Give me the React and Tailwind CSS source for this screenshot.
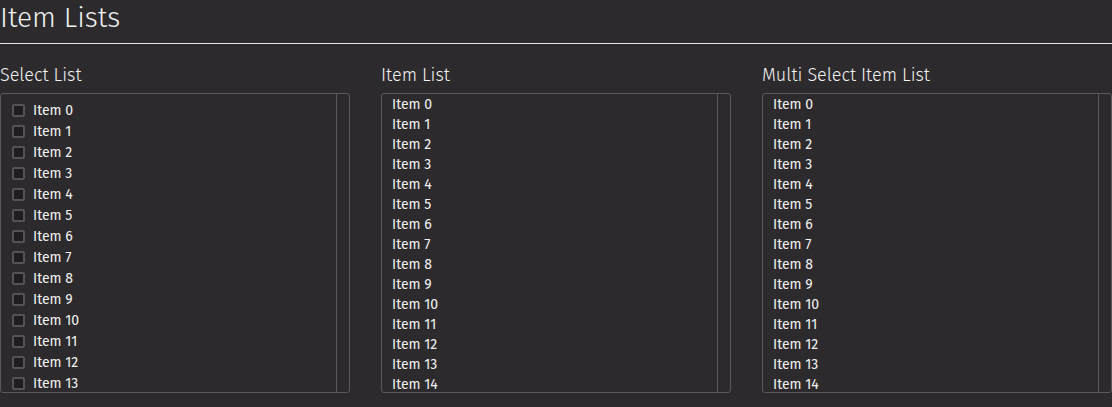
import React from "react";

const font = { fontFamily: "'Fira Sans', Roboto, 'Noto Sans', sans-serif" };

function Checkbox() {
  return <span className="block w-[13px] h-[13px] border-2 border-[#555357] bg-[#1f1d20] rounded-[2px]" />;
}

function SelectList() {
  const items = Array.from({ length: 14 }, (_, i) => i);
  return (
    <div className="relative h-[300px] border border-[#5a585b] rounded-[3px] overflow-hidden flex">
      <div className="flex-1 pt-[6px] pl-[11px]">
        {items.map((i) => (
          <div key={i} className="h-[21px] flex items-center gap-[8px]">
            <Checkbox />
            <span className="text-[14px] font-normal text-[#f2f2f2] leading-none">Item {i}</span>
          </div>
        ))}
      </div>
      <div className="w-[13px] border-l border-[#5a585b]" />
    </div>
  );
}

function ItemList() {
  const items = Array.from({ length: 15 }, (_, i) => i);
  return (
    <div className="relative h-[300px] border border-[#5a585b] rounded-[3px] overflow-hidden flex">
      <div className="flex-1 pt-[1px] pl-[10px]">
        {items.map((i) => (
          <div key={i} className="h-[20px] flex items-center">
            <span className="text-[14px] font-normal text-[#f2f2f2] leading-none">Item {i}</span>
          </div>
        ))}
      </div>
      <div className="w-[13px] border-l border-[#5a585b]" />
    </div>
  );
}

export default function App() {
  return (
    <div className="w-[1112px] h-[407px] bg-[#2c2a2d] text-[#f2f2f2] overflow-hidden" style={font}>
      <div className="h-[43px] pl-[0px] text-[28px] font-light leading-[35px]">Item Lists</div>
      <div className="h-px bg-[#e8e8e8]" />
      <div className="grid grid-cols-[350px_350px_350px] gap-x-[31px] pt-[19px]">
        <div>
          <div className="h-[30px] text-[18px] font-light leading-[24px]">Select List</div>
          <SelectList />
        </div>
        <div>
          <div className="h-[30px] text-[18px] font-light leading-[24px]">Item List</div>
          <ItemList />
        </div>
        <div>
          <div className="h-[30px] text-[18px] font-light leading-[24px]">Multi Select Item List</div>
          <ItemList />
        </div>
      </div>
    </div>
  );
}
